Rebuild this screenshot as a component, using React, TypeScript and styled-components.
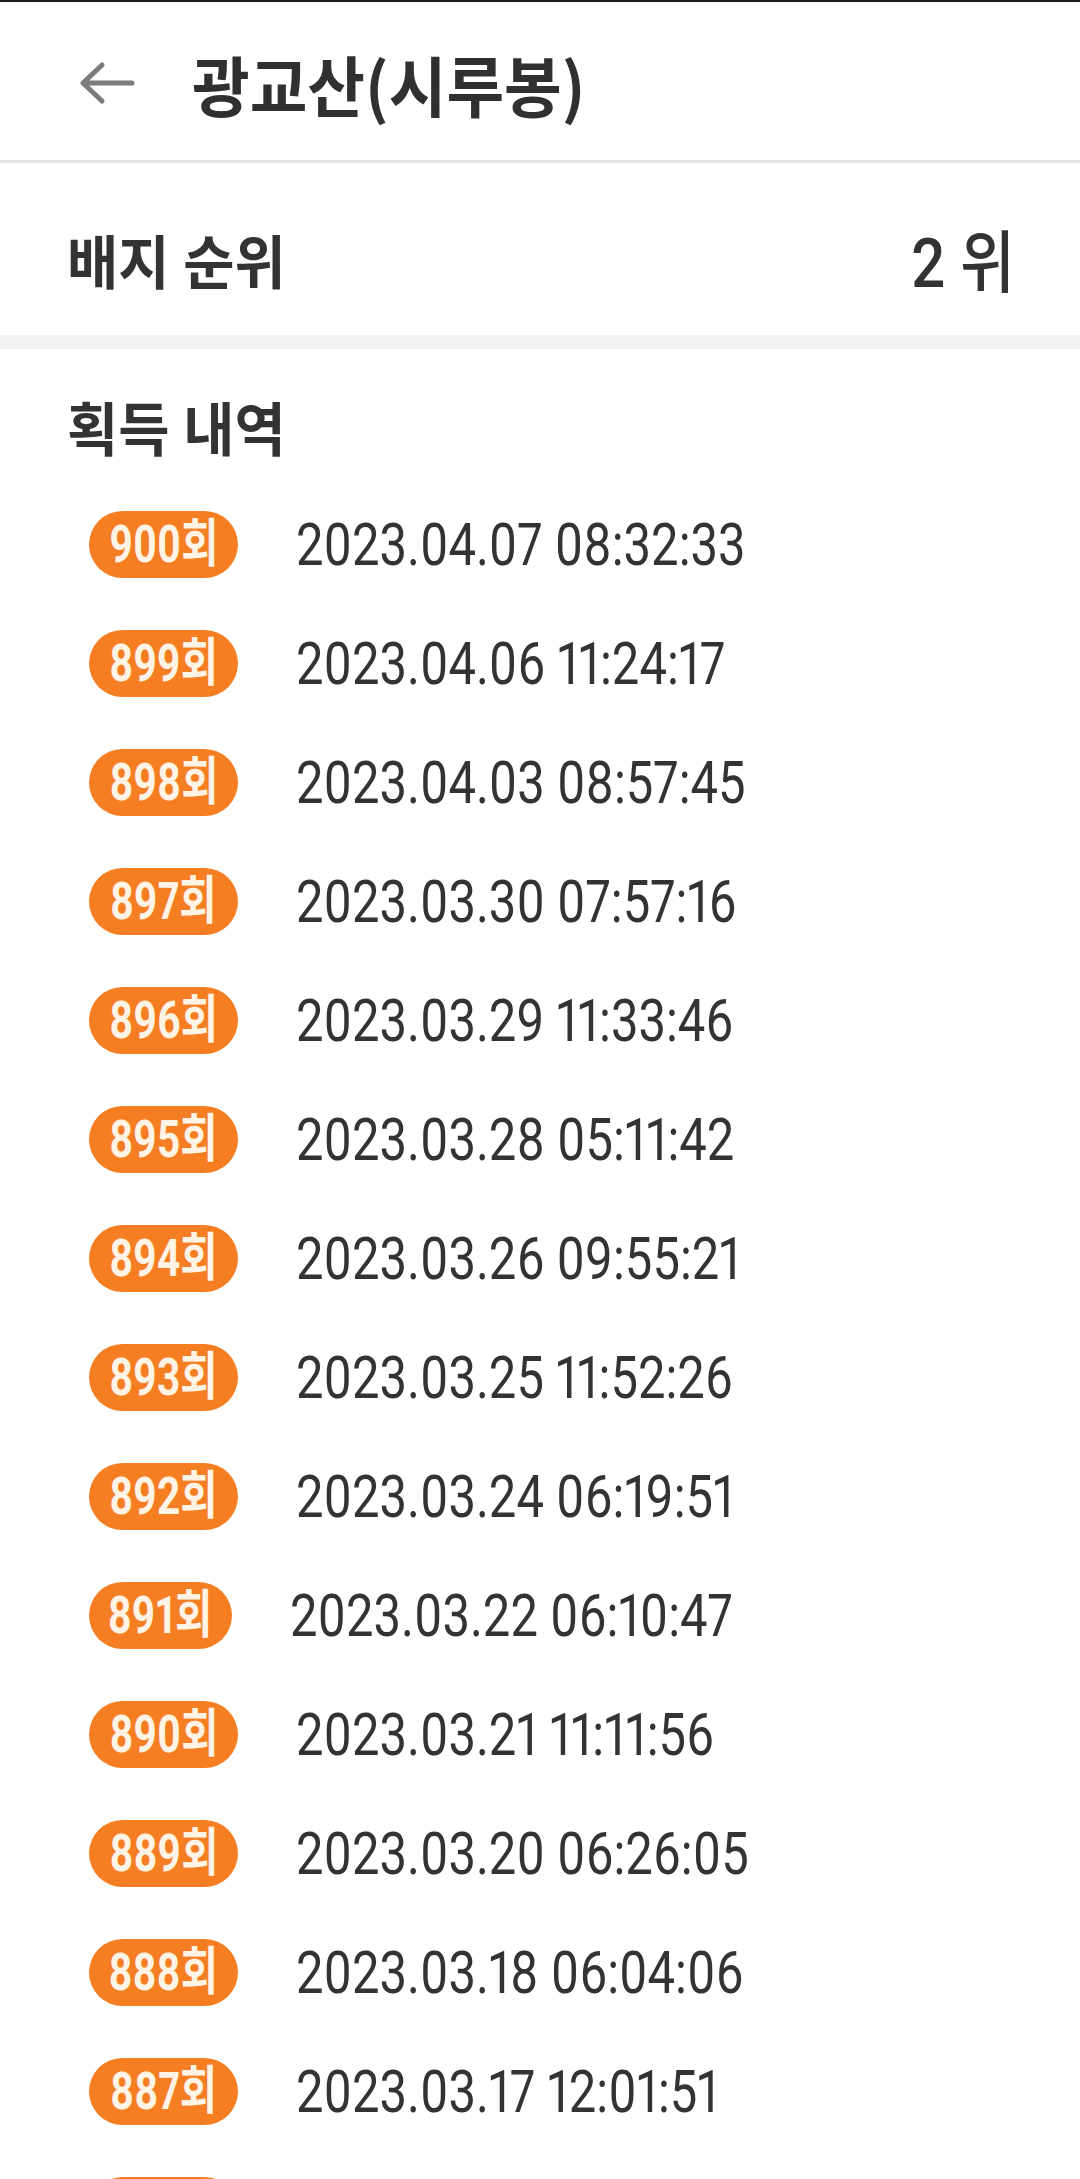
import React from "react";
import styled, { createGlobalStyle } from "styled-components";

const GlobalStyle = createGlobalStyle`
  html, body {
    margin: 0;
    padding: 0;
    background: #ffffff;
  }
  body {
    font-family: Roboto, "Noto Sans CJK KR", sans-serif;
    color: #333333;
  }
  * { box-sizing: border-box; }
`;

const Page = styled.div`
  width: 1080px;
  border-top: 2px solid #1a1a1a;
  background: #ffffff;
`;

const Header = styled.header`
  display: flex;
  align-items: center;
  gap: 57px;
  height: 161px;
  padding: 4px 0 0 79px;
  border-bottom: 3px solid #e3e3e3;
`;

const BackButton = styled.button`
  display: flex;
  align-items: center;
  justify-content: center;
  width: 56px;
  height: 44px;
  padding: 0;
  border: none;
  background: transparent;
  cursor: pointer;
`;

const Title = styled.h1`
  margin: 0;
  font-family: "Noto Sans CJK KR", sans-serif;
  font-weight: 700;
  font-size: 66px;
  line-height: 1;
  color: #303030;
`;

const TitleText = styled.span`
  display: inline-block;
  white-space: nowrap;
  transform: scaleX(0.95);
  transform-origin: left center;
`;

const RankSection = styled.section`
  display: flex;
  align-items: center;
  justify-content: space-between;
  box-sizing: content-box;
  height: 60px;
  padding: 71px 65px 41px 67px;
  border-bottom: 14px solid #f2f3f5;
`;

const SectionLabel = styled.h2`
  margin: 0;
  font-family: Roboto, "Noto Sans CJK KR", sans-serif;
  font-weight: 700;
  font-size: 58px;
  line-height: 60px;
  color: #333333;
`;

const LabelText = styled.span`
  display: inline-block;
  white-space: nowrap;
  transform: scaleX(0.96);
  transform-origin: left center;
`;

const RankValue = styled.span`
  display: inline-block;
  font-family: Roboto, "Noto Sans CJK KR", sans-serif;
  font-weight: 500;
  font-size: 68px;
  line-height: 60px;
  color: #333333;
  white-space: nowrap;
  transform: scaleX(0.88);
  transform-origin: right center;
`;

const HistorySection = styled.section`
  padding: 52px 0 0 67px;
`;

const List = styled.ul`
  list-style: none;
  margin: 24px 0 0 -67px;
  padding: 0;
`;

const Row = styled.li`
  display: flex;
  align-items: center;
  gap: 58px;
  height: 119px;
  padding-left: 89px;
`;

const Badge = styled.span<{ $narrow?: boolean }>`
  display: inline-flex;
  align-items: center;
  justify-content: center;
  flex: none;
  width: ${(p) => (p.$narrow ? 143 : 149)}px;
  height: 67px;
  border-radius: 34px;
  background: #f57e22;
`;

const BadgeText = styled.span`
  display: inline-block;
  font-family: Roboto, "Noto Sans CJK KR", sans-serif;
  font-weight: 700;
  font-size: 52px;
  line-height: 1;
  color: #fff3e6;
  white-space: nowrap;
  font-variant-numeric: proportional-nums;
  transform: scaleX(0.78);
  transform-origin: center center;
`;

const DateText = styled.span`
  display: inline-block;
  font-family: Roboto, "Noto Sans CJK KR", sans-serif;
  font-weight: 400;
  font-size: 59px;
  line-height: 1;
  color: #333333;
  white-space: nowrap;
  font-variant-numeric: proportional-nums;
  transform: scaleX(0.83);
  transform-origin: left center;
`;

const history: [number, string][] = [
  [900, "2023.04.07 08:32:33"],
  [899, "2023.04.06 11:24:17"],
  [898, "2023.04.03 08:57:45"],
  [897, "2023.03.30 07:57:16"],
  [896, "2023.03.29 11:33:46"],
  [895, "2023.03.28 05:11:42"],
  [894, "2023.03.26 09:55:21"],
  [893, "2023.03.25 11:52:26"],
  [892, "2023.03.24 06:19:51"],
  [891, "2023.03.22 06:10:47"],
  [890, "2023.03.21 11:11:56"],
  [889, "2023.03.20 06:26:05"],
  [888, "2023.03.18 06:04:06"],
  [887, "2023.03.17 12:01:51"],
  [886, "2023.03.16 07:14:38"],
];

const BackArrow = () => (
  <svg width="56" height="44" viewBox="0 0 56 44" fill="none">
    <path
      d="M4 22 H53 M23 4 L4 22 L23 40"
      stroke="#7b7b7b"
      strokeWidth="5"
      strokeLinecap="round"
      strokeLinejoin="round"
    />
  </svg>
);

export default function App() {
  return (
    <>
      <GlobalStyle />
      <Page>
        <Header>
          <BackButton aria-label="뒤로">
            <BackArrow />
          </BackButton>
          <Title>
            <TitleText>광교산(시루봉)</TitleText>
          </Title>
        </Header>
        <RankSection>
          <SectionLabel>
            <LabelText>배지 순위</LabelText>
          </SectionLabel>
          <RankValue>2 위</RankValue>
        </RankSection>
        <HistorySection>
          <SectionLabel>
            <LabelText>획득 내역</LabelText>
          </SectionLabel>
          <List>
            {history.map(([n, d]) => (
              <Row key={n}>
                <Badge $narrow={String(n).includes("1")}>
                  <BadgeText>{n}회</BadgeText>
                </Badge>
                <DateText>{d}</DateText>
              </Row>
            ))}
          </List>
        </HistorySection>
      </Page>
    </>
  );
}
